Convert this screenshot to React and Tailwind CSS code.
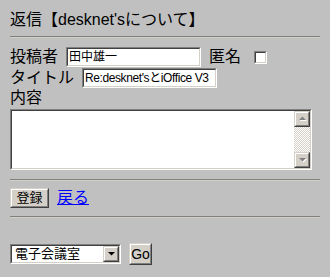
export default function App() {
  const Tri = ({ down, color = "#000", shadow = false }) => (
    <svg width="9" height="6" viewBox="0 0 9 6" className="block">
      {shadow && (
        <polygon
          points={down ? "2,2 9,2 5.5,5.5" : "2,5 9,5 5.5,1.5"}
          fill="#ffffff"
        />
      )}
      <polygon points={down ? "1,1 8,1 4.5,4.5" : "1,4 8,4 4.5,0.5"} fill={color} />
    </svg>
  );

  const RaisedSmall = ({ children }) => (
    <div className="w-[16px] h-[16px] border border-t-[#d4d0c8] border-l-[#d4d0c8] border-b-[#404040] border-r-[#404040] bg-[#d4d0c8]">
      <div className="w-full h-full border border-t-white border-l-white border-b-[#808080] border-r-[#808080] flex items-center justify-center">
        {children}
      </div>
    </div>
  );

  return (
    <div className="w-[330px] h-[277px] bg-[#c0c0c0] px-[10px] pt-[10px] font-['Liberation_Sans','Noto_Sans_CJK_JP',sans-serif] text-black overflow-hidden">
      <div className="h-[20px] leading-[20px] text-[16px] whitespace-nowrap">返信【desknet'sについて】</div>

      <div className="mt-[6px] w-[310px] h-[2px] border-t border-t-[#808080] border-b border-b-[#d4d0c8]" />

      <div className="mt-[9px] h-[20px] flex items-center">
        <span className="w-[56px] text-[16px] leading-[20px] whitespace-nowrap">投稿者</span>
        <div className="w-[135px] h-[20px] border border-t-[#808080] border-l-[#808080] border-b-white border-r-white">
          <div className="w-full h-full border border-t-[#404040] border-l-[#404040] border-b-[#d4d0c8] border-r-[#d4d0c8] bg-white pl-[1px] text-[12px] leading-[16px] whitespace-nowrap overflow-hidden">
            田中雄一
          </div>
        </div>
        <span className="ml-[8px] text-[16px] leading-[20px] whitespace-nowrap">匿名</span>
        <div className="ml-[13px] w-[13px] h-[13px] border border-t-[#808080] border-l-[#808080] border-b-white border-r-white">
          <div className="w-full h-full border border-t-[#404040] border-l-[#404040] border-b-[#d4d0c8] border-r-[#d4d0c8] bg-white" />
        </div>
      </div>

      <div className="mt-[1px] h-[20px] flex items-center">
        <span className="w-[72px] text-[16px] leading-[20px] whitespace-nowrap">タイトル</span>
        <div className="w-[135px] h-[20px] border border-t-[#808080] border-l-[#808080] border-b-white border-r-white">
          <div className="w-full h-full border border-t-[#404040] border-l-[#404040] border-b-[#d4d0c8] border-r-[#d4d0c8] bg-white pl-[1px] text-[12px] leading-[16px] tracking-[-0.4px] whitespace-nowrap overflow-hidden">
            Re:desknet'sとiOffice V3
          </div>
        </div>
      </div>

      <div className="h-[20px] leading-[20px] text-[16px]">内容</div>

      <div className="mt-[1px] w-[302px] h-[61px] border border-t-[#808080] border-l-[#808080] border-b-white border-r-white">
        <div className="w-full h-full border border-t-[#404040] border-l-[#404040] border-b-[#d4d0c8] border-r-[#d4d0c8] bg-white flex">
          <div className="flex-1" />
          <div className="w-[16px] flex flex-col">
            <RaisedSmall>
              <Tri color="#808080" shadow />
            </RaisedSmall>
            <div className="flex-1 bg-[repeating-conic-gradient(#ffffff_0%_25%,#d4d0c8_0%_50%)] bg-[length:2px_2px]" />
            <RaisedSmall>
              <Tri down color="#808080" shadow />
            </RaisedSmall>
          </div>
        </div>
      </div>

      <div className="mt-[9px] w-[310px] h-[2px] border-t border-t-[#808080] border-b border-b-[#d4d0c8]" />

      <div className="mt-[7px] h-[20px] flex items-center">
        <div className="w-[39px] h-[20px] border border-t-[#d4d0c8] border-l-[#d4d0c8] border-b-[#404040] border-r-[#404040] bg-[#d4d0c8]">
          <div className="w-full h-full border border-t-white border-l-white border-b-[#808080] border-r-[#808080] flex items-center justify-center text-[13px] leading-[16px]">
            登録
          </div>
        </div>
        <a href="#" className="ml-[8px] text-[16px] leading-[20px] text-[#0000ff] underline">戻る</a>
      </div>

      <div className="mt-[8px] w-[310px] h-[2px] border-t border-t-[#808080] border-b border-b-[#d4d0c8]" />

      <div className="mt-[25px] h-[22px] flex items-center">
        <div className="w-[111px] h-[20px] border border-t-[#808080] border-l-[#808080] border-b-white border-r-white">
          <div className="w-full h-full border border-t-[#404040] border-l-[#404040] border-b-[#d4d0c8] border-r-[#d4d0c8] bg-white flex items-center">
            <span className="flex-1 pl-[3px] text-[13px] leading-[16px] whitespace-nowrap overflow-hidden">電子会議室</span>
            <RaisedSmall>
              <Tri down color="#000000" />
            </RaisedSmall>
          </div>
        </div>
        <div className="ml-[8px] w-[23px] h-[22px] border border-t-[#d4d0c8] border-l-[#d4d0c8] border-b-[#404040] border-r-[#404040] bg-[#d4d0c8]">
          <div className="w-full h-full border border-t-white border-l-white border-b-[#808080] border-r-[#808080] flex items-center justify-center text-[14px] leading-[16px]">
            Go
          </div>
        </div>
      </div>
    </div>
  );
}
